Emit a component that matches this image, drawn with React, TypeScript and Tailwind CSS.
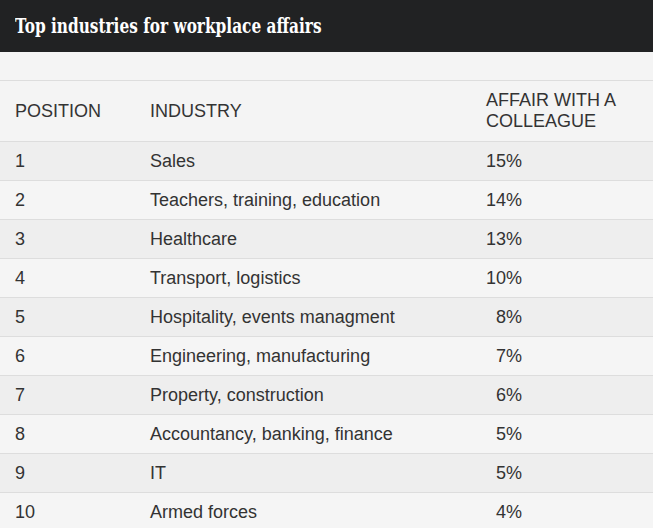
const rows: [string, string, string][] = [
  ["1", "Sales", "15%"],
  ["2", "Teachers, training, education", "14%"],
  ["3", "Healthcare", "13%"],
  ["4", "Transport, logistics", "10%"],
  ["5", "Hospitality, events managment", "8%"],
  ["6", "Engineering, manufacturing", "7%"],
  ["7", "Property, construction", "6%"],
  ["8", "Accountancy, banking, finance", "5%"],
  ["9", "IT", "5%"],
  ["10", "Armed forces", "4%"],
];

export default function App() {
  return (
    <div className="w-[653px] h-[528px] overflow-hidden bg-[#f4f4f4] font-[Liberation_Sans] text-[#333]">
      <div className="h-[52px] bg-[#212223] flex items-center px-[15px]">
        <h2 className="text-white font-bold text-[20px] font-[DejaVu_Serif] whitespace-nowrap origin-left [transform:scaleX(0.767)]">
          Top industries for workplace affairs
        </h2>
      </div>
      <div className="h-[28px]" />
      <table className="w-full border-collapse text-[18px] leading-[21px]">
        <thead>
          <tr className="h-[61px] border-y border-[#dddddd] bg-[#f4f4f4]">
            <th className="w-[135px] pl-[15px] text-left font-normal">POSITION</th>
            <th className="w-[336px] pl-[15px] text-left font-normal">INDUSTRY</th>
            <th className="pl-[15px] pr-[30px] text-left font-normal">AFFAIR WITH A COLLEAGUE</th>
          </tr>
        </thead>
        <tbody>
          {rows.map(([pos, industry, pct], i) => (
            <tr
              key={pos}
              className={`h-[39px] border-b border-[#dddddd] ${i % 2 === 0 ? "bg-[#eeeeee]" : "bg-[#f5f5f5]"}`}
            >
              <td className="pl-[15px]">{pos}</td>
              <td className="pl-[15px]">{industry}</td>
              <td className="pl-[15px]">
                <span className="inline-block w-[36px] text-right">{pct}</span>
              </td>
            </tr>
          ))}
        </tbody>
      </table>
    </div>
  );
}
